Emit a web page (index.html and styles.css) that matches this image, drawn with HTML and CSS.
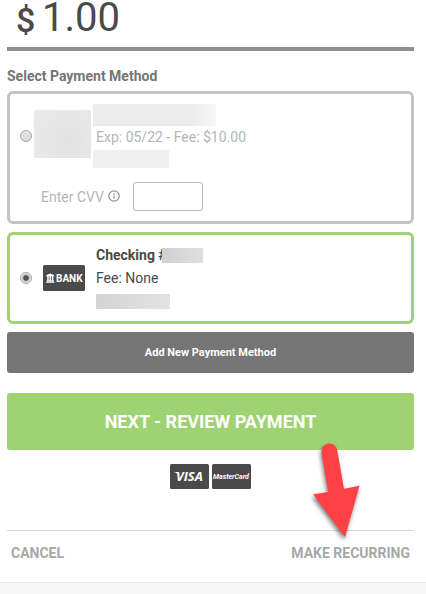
FILE: index.html
```html
<!DOCTYPE html>
<html lang="en">
<head>
<meta charset="utf-8">
<meta name="viewport" content="width=device-width, initial-scale=1">
<title>Payment</title>
<link rel="stylesheet" href="styles.css">
</head>
<body>
<form class="payment">
  <div class="amount">
    <label class="currency" for="amount">$</label>
    <input class="amount-input" id="amount" type="text" value="1.00">
  </div>

  <h2 class="section-title">Select Payment Method</h2>

  <div class="method method-card">
    <div class="method-row">
      <input class="radio" type="radio" name="method" id="card">
      <span class="mask mask-logo"></span>
      <label class="details" for="card">
        <span class="mask mask-number"></span>
        <span class="detail-line">Exp: 05/22 - Fee: $10.00</span>
        <span class="mask mask-name"></span>
      </label>
    </div>
    <div class="cvv">
      <label for="cvv">Enter CVV</label>
      <svg class="info" viewBox="0 0 12 12" aria-hidden="true">
        <circle cx="6" cy="6" r="5.2" fill="none" stroke="currentColor" stroke-width="1.2"/>
        <path d="M6 5.2v3.6M6 3v1.2" stroke="currentColor" stroke-width="1.2"/>
      </svg>
      <input class="cvv-input" id="cvv" type="text">
    </div>
  </div>

  <div class="method method-bank">
    <input class="radio" type="radio" name="method" id="bank" checked>
    <svg class="bank-logo" viewBox="0 0 42 26" role="img" aria-label="Bank">
      <rect width="42" height="26" rx="1.5" fill="#4a4a4a"/>
      <path fill="#fff" d="M7.2 8.5 11.2 10.3v.9H3.2v-.9zM4.2 11.2h1.5v4.2H4.2zM6.5 11.2h1.5v4.2H6.5zM8.8 11.2h1.5v4.2H8.8zM3.6 15.4h7.3v1H3.6zM3 16.7h8.6v1H3z"/>
      <text class="bank-text" x="13" y="17">BANK</text>
    </svg>
    <label class="details" for="bank">
      <span class="detail-line account">Checking #<span class="mask mask-account"></span></span>
      <span class="detail-line">Fee: None</span>
      <span class="mask mask-holder"></span>
    </label>
  </div>

  <button class="button add-button" type="button">Add New Payment Method</button>
  <button class="button next-button" type="button">NEXT - REVIEW PAYMENT</button>

  <div class="brands">
    <svg class="brand" viewBox="0 0 39 25" role="img" aria-label="Visa">
      <rect width="39" height="25" rx="1.5" fill="#4a4a4a"/>
      <path d="M4 8h3.5l1.5 2-.5 1C7.5 9.4 6 8.7 4 8.3z" fill="#fff"/>
      <text class="visa-text" x="6" y="17">VISA</text>
    </svg>
    <svg class="brand" viewBox="0 0 39 25" role="img" aria-label="MasterCard">
      <rect width="39" height="25" rx="1.5" fill="#4a4a4a"/>
      <text class="mastercard-text" x="19" y="15" text-anchor="middle">MasterCard</text>
    </svg>
  </div>

  <div class="actions">
    <a class="action" href="#cancel">CANCEL</a>
    <span class="recurring">
      <a class="action" href="#recurring">MAKE RECURRING</a>
      <svg class="arrow" viewBox="0 0 60 104" aria-hidden="true">
        <path fill="#ff4145" d="M12.5 17.5A7.9 7.9 0 0 1 28.2 15.3L35 53.8 50.5 50.8 36 102 4 59.3 19.2 57z"/>
      </svg>
    </span>
  </div>
</form>
<footer class="footer"></footer>
</body>
</html>
```
FILE: styles.css
```css
* {
  box-sizing: border-box;
}

html,
body {
  height: 100%;
}

body {
  display: flex;
  flex-direction: column;
  margin: 0;
  background: #fff;
  color: #4a4a4a;
  font-family: Roboto, "Liberation Sans", sans-serif;
  font-size: 14px;
  line-height: 20px;
}

.payment {
  padding: 0 12px 0 7px;
}

.amount {
  display: flex;
  height: 51px;
  padding-left: 9px;
  border-bottom: 4px solid #919191;
}

.currency {
  width: 26px;
  font-size: 34px;
  font-weight: 500;
  line-height: 40px;
}

.amount-input {
  flex: 1;
  min-width: 0;
  height: 34px;
  padding: 0;
  border: 0;
  background: none;
  color: inherit;
  font: 40px/34px Roboto, "Liberation Sans", sans-serif;
}

.section-title {
  margin: 15px 0 5px;
  color: #757575;
  font-size: 14px;
  font-weight: 700;
  line-height: 20px;
}

.method {
  margin-bottom: 8px;
  border: 3px solid #c3c3c3;
  border-radius: 6px;
}

.method-card {
  padding: 10px;
  color: #b5b5b5;
}

.method-row,
.cvv {
  display: flex;
  align-items: center;
}

.radio {
  flex: none;
  appearance: none;
  width: 12px;
  height: 12px;
  margin: 0;
  border: 1px solid #a5a5a5;
  border-radius: 50%;
  background: linear-gradient(#e6e6e6, #d9d9d9);
}

.radio:checked {
  background: radial-gradient(circle, #505050 0 2px, #e4e4e4 4px);
}

.mask {
  display: block;
  background: #efefef;
}

.mask-logo {
  width: 57px;
  height: 48px;
  margin: 0 0 4px 2px;
  background: radial-gradient(circle at 60% 65%, #e1e1e1, #ebebeb);
}

.method-row .details {
  margin-left: 2px;
}

.method-row .detail-line {
  padding-left: 3px;
  margin: 1px 0 3px;
}

.details,
.detail-line {
  display: block;
}

.mask-number {
  width: 123px;
  height: 22px;
  background: linear-gradient(90deg, #ececec 80%, #f7f7f7);
}

.mask-name {
  width: 76px;
  height: 18px;
}

.cvv {
  margin: 14px 0 0 21px;
}

.info {
  width: 12px;
  height: 12px;
  margin: 0 13px 2px 4px;
  color: #919191;
}

.cvv-input {
  width: 70px;
  height: 29px;
  padding: 0 6px;
  border: 1px solid #bbb;
  border-radius: 3px;
}

.method-bank {
  display: flex;
  align-items: center;
  padding: 10px 10px 11px;
  border-color: #9fd272;
}

.bank-logo {
  flex: none;
  width: 42px;
  height: 26px;
  margin: 0 11px;
}

.bank-text {
  fill: #fff;
  font: 700 10px Roboto, sans-serif;
}

.method-bank .detail-line {
  margin-bottom: 3px;
}

.account {
  display: flex;
  align-items: center;
  font-weight: 700;
}

.mask-account {
  position: relative;
  width: 41px;
  height: 15px;
  margin-left: -5px;
  background: linear-gradient(90deg, #d0d0d0, #dfdfdf);
}

.mask-holder {
  width: 74px;
  height: 15px;
  margin: 6px 0 1px;
  background: linear-gradient(90deg, #d4d4d4, #e2e2e2);
}

.button {
  display: block;
  width: 100%;
  border: 0;
  border-radius: 3px;
  color: #fff;
  font-family: inherit;
  font-weight: 700;
}

.add-button {
  height: 41px;
  margin-bottom: 20px;
  background: #757575;
  font-size: 11px;
}

.next-button {
  height: 57px;
  background: #9fd272;
  font-size: 18px;
}

.brands {
  display: flex;
  justify-content: center;
  gap: 3px;
  padding: 14px 0 41px;
}

.brand {
  width: 39px;
  height: 25px;
}

.visa-text {
  fill: #fff;
  font: italic 700 13px "Open Sans", sans-serif;
}

.mastercard-text {
  fill: #fff;
  font: italic 700 7px "Liberation Sans Narrow", Roboto, sans-serif;
}

.actions {
  display: flex;
  justify-content: space-between;
  padding: 12px 4px 19px;
  border-top: 1px solid #d9d9d9;
}

.action {
  color: #a8a8a8;
  font-weight: 700;
  text-decoration: none;
}

.recurring {
  position: relative;
}

.arrow {
  position: absolute;
  right: 41px;
  bottom: 24px;
  width: 60px;
  height: 104px;
  overflow: visible;
  filter: drop-shadow(-1px 3px 2px rgba(0, 0, 0, 0.5));
  pointer-events: none;
}

.footer {
  flex: 1;
  border-top: 1px solid #e8e8e8;
  background: #f6f6f6;
}
```
